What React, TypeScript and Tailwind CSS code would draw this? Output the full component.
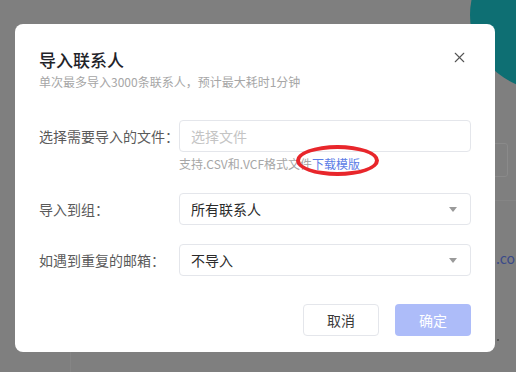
import { X } from "lucide-react";

const font = { fontFamily: '"Noto Sans CJK SC", "Noto Sans", sans-serif' };

function Caret() {
  return (
    <svg width="8" height="5" viewBox="0 0 8 5" className="shrink-0">
      <path d="M0 0 L8 0 L4 5 Z" fill="#9a9a9a" />
    </svg>
  );
}

function SelectBox({ value }: { value: string }) {
  return (
    <div className="flex h-[32px] w-[292px] items-center justify-between rounded-[4px] border border-[#e4e6eb] bg-white pl-[11px] pr-[13px]">
      <span className="text-[14px] text-[#2b2b2b]">{value}</span>
      <Caret />
    </div>
  );
}

export default function App() {
  return (
    <div
      className="relative h-[372px] w-[516px] overflow-hidden bg-[#7f7f7f] pl-[15px] pt-[24px]"
      style={font}
    >
      {/* page behind the overlay */}
      <div className="absolute left-[470px] top-[-60px] h-[150px] w-[150px] rounded-full bg-[#0e6f73]" />
      <div className="absolute left-[480px] top-[143px] h-[34px] w-[28px] rounded-[3px] border border-[#8a8a8a]" />
      <div className="absolute left-[495px] top-[200px] h-px w-[21px] bg-[#858585]" />
      <div className="absolute left-[496px] top-[248px] text-[14px] text-[#3a4a8a]">.co</div>
      <div className="absolute left-[497px] top-[339px] h-[2px] w-[2px] bg-[#555]" />
      <div className="absolute left-[70px] top-[352px] h-[20px] w-px bg-[#858585]" />

      <div className="relative h-[328px] w-[480px] rounded-[8px] bg-white pl-[24px] pr-[24px] pt-[24px]">
        <button className="absolute right-[27px] top-[25px] text-[#555]">
          <X size={17} strokeWidth={1.5} />
        </button>

        <h2 className="text-[17px] font-medium leading-[24px] text-[#1f2329]">导入联系人</h2>
        <p className="mt-[1px] text-[12px] leading-[18px] text-[#a6a6a6]">
          单次最多导入3000条联系人，预计最大耗时1分钟
        </p>

        <div className="mt-[29px] flex">
          <div className="flex h-[32px] w-[140px] items-center text-[14px] text-[#5a5a5a]">选择需要导入的文件：</div>
          <div className="flex flex-col">
            <div className="flex h-[32px] w-[292px] items-center rounded-[4px] border border-[#e4e6eb] pl-[11px] text-[14px] text-[#c4c4c4]">
              选择文件
            </div>
            <div className="relative mt-[3px] text-[12px] leading-[18px] text-[#a6a6a6]">
              支持.CSV和.VCF格式文件<span className="text-[#5b7ce6]">下载模版</span>
              <div className="absolute left-[117px] top-[-10px] h-[31px] w-[83px] rounded-[50%] border-[4px] border-[#e8262b]" />
            </div>
          </div>
        </div>

        <div className="mt-[20px] flex">
          <div className="flex h-[32px] w-[140px] items-center text-[14px] text-[#5a5a5a]">导入到组：</div>
          <SelectBox value="所有联系人" />
        </div>

        <div className="mt-[19px] flex">
          <div className="flex h-[32px] w-[140px] items-center text-[14px] text-[#5a5a5a]">如遇到重复的邮箱：</div>
          <SelectBox value="不导入" />
        </div>

        <div className="mt-[28px] flex justify-end gap-[16px]">
          <button className="h-[32px] w-[76px] rounded-[4px] border border-[#e4e6eb] bg-white text-[14px] text-[#3a3a3a]">
            取消
          </button>
          <button className="h-[32px] w-[76px] rounded-[4px] bg-[#adbcf9] text-[14px] text-white">确定</button>
        </div>
      </div>
    </div>
  );
}
